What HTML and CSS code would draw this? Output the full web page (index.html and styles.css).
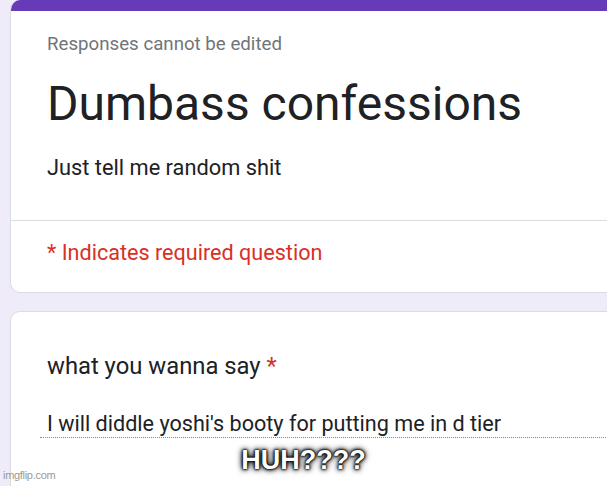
FILE: index.html
```html
<!DOCTYPE html>
<html>
<head>
<meta charset="utf-8">
<link rel="stylesheet" href="styles.css">
</head>
<body>
<div class="page">
  <div class="card header-card">
    <div class="accent"></div>
    <div class="header-top">
      <div class="note">Responses cannot be edited</div>
      <div class="title">Dumbass confessions</div>
      <div class="desc">Just tell me random shit</div>
    </div>
    <div class="divider"></div>
    <div class="required">* Indicates required question</div>
  </div>
  <div class="card question-card">
    <div class="question">what you wanna say <span class="star">*</span></div>
    <div class="answer">I will diddle yoshi's booty for putting me in d tier</div>
  </div>
</div>
<div class="caption">HUH????</div>
<div class="watermark">imgflip.com</div>
</body>
</html>
```

FILE: styles.css
```css
html, body {
  margin: 0;
  padding: 0;
  width: 607px;
  height: 486px;
  overflow: hidden;
  background: #f0ebf8;
  font-family: Roboto, "Noto Sans", Arial, sans-serif;
  color: #202124;
}
.page {
  padding-left: 10px;
  display: flex;
  flex-direction: column;
  gap: 18px;
}
.card {
  width: 680px;
  background: #fff;
  border: 1px solid #dadce0;
  border-radius: 10px;
  box-sizing: border-box;
  overflow: hidden;
}
.header-card {
  border-top: none;
}
.accent {
  height: 11px;
  background: #673ab7;
  margin: 0 -1px;
}
.header-top {
  padding: 21px 0 0 36px;
  height: 209px;
  box-sizing: border-box;
}
.note {
  font-size: 18.7px;
  line-height: 24px;
  color: #70757a;
}
.title {
  font-size: 48px;
  line-height: 60px;
  margin-top: 18px;
}
.desc {
  font-size: 21.8px;
  line-height: 26px;
  margin-top: 21px;
}
.divider {
  height: 1px;
  background: #dadce0;
}
.required {
  padding: 18px 0 0 36px;
  height: 71px;
  box-sizing: border-box;
  font-size: 21.6px;
  line-height: 28px;
  color: #d93025;
}
.question-card {
  height: 200px;
  padding: 40px 0 0 36px;
}
.question {
  font-size: 23.8px;
  line-height: 28px;
}
.star {
  color: #d93025;
}
.answer {
  margin-top: 30px;
  font-size: 21.6px;
  line-height: 26px;
  padding-top: 1px;
  border-bottom: 1px dotted #8a8a8a;
  width: 559px;
  margin-left: -7px;
  padding-left: 7px;
}
.caption {
  position: absolute;
  left: 0;
  width: 607px;
  top: 443px;
  text-align: center;
  font-family: "Liberation Sans", Arial, sans-serif;
  font-weight: bold;
  font-size: 27px;
  line-height: 34px;
  color: #fff;
  text-shadow: 0 0 1px #000, 0 0 2px #000, 0 0 3px #000, 0 0 5px #000, 0 0 7px #000;
}
.watermark {
  position: absolute;
  left: 3px;
  top: 468px;
  font-family: "Liberation Sans", Arial, sans-serif;
  font-size: 11px;
  line-height: 14px;
  color: #9a9a9a;
  letter-spacing: -0.3px;
}
```
